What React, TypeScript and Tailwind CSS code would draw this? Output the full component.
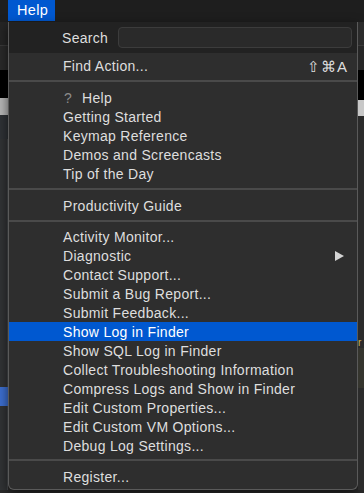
import React from 'react';

type Item = { label: string; icon?: boolean; submenu?: boolean; active?: boolean };

const group1: Item[] = [
  { label: 'Help', icon: true },
  { label: 'Getting Started' },
  { label: 'Keymap Reference' },
  { label: 'Demos and Screencasts' },
  { label: 'Tip of the Day' },
];

const group3: Item[] = [
  { label: 'Activity Monitor...' },
  { label: 'Diagnostic', submenu: true },
  { label: 'Contact Support...' },
  { label: 'Submit a Bug Report...' },
  { label: 'Submit Feedback...' },
  { label: 'Show Log in Finder', active: true },
  { label: 'Show SQL Log in Finder' },
  { label: 'Collect Troubleshooting Information' },
  { label: 'Compress Logs and Show in Finder' },
  { label: 'Edit Custom Properties...' },
  { label: 'Edit Custom VM Options...' },
  { label: 'Debug Log Settings...' },
];

function Row({ item }: { item: Item }) {
  return (
    <div
      className={
        'flex h-[19px] items-center pr-[13px] ' +
        (item.active ? 'bg-[#0058d0] text-white' : 'text-[#dedede]')
      }
    >
      {item.icon ? (
        <span className="flex items-center pl-[52px]">
          <span className="w-[14px] text-center text-[#8c8c8c]">?</span>
          <span className="ml-[7px]">{item.label}</span>
        </span>
      ) : (
        <span className="pl-[54px]">{item.label}</span>
      )}
      {item.submenu && (
        <svg className="ml-auto" width="9" height="10" viewBox="0 0 9 10">
          <path d="M0 0 L9 5 L0 10 Z" fill="#d4d4d4" />
        </svg>
      )}
    </div>
  );
}

function Separator({ top, bottom }: { top: string; bottom: string }) {
  return <div className={`h-[2px] bg-[#4a4a4a] ${top} ${bottom}`} />;
}

export default function App() {
  return (
    <div
      className="w-[364px] h-[493px] overflow-hidden bg-[#2b2b2b] text-[13px] leading-none"
      style={{ fontFamily: '"Liberation Sans", Arial, sans-serif' }}
    >
      {/* mac menu bar */}
      <div className="flex h-[22px] bg-[#1e1e1e] pl-[8px]">
        <div className="flex h-[21px] w-[47px] items-center bg-[#0058d0] pl-[9px] text-[14.5px] tracking-[0.3px] text-white">
          Help
        </div>
      </div>

      <div className="flex">
        {/* ide peeking out on the left */}
        <div className="flex w-[8px] flex-col">
          <div className="h-[23px] bg-[#252525]" />
          <div className="h-[25px] bg-[#2a2a2a] border-t border-[#3a3a3a]" />
          <div className="h-[28px] bg-black" />
          <div className="h-[17px] bg-[#b8b8b8]" />
          <div className="h-[24px] bg-[#2f3236]" />
          <div className="h-[248px] bg-[#313335] border-r border-[#45484b]" />
          <div className="h-[19px] bg-[#3d6fd0]" />
          <div className="flex-1 bg-[#313335] border-r border-[#45484b]" />
        </div>

        {/* the menu */}
        <div className="w-[350px] h-[468px] rounded-b-[6px] border border-t-0 border-[#5a5a5a] bg-[#2e2e2e] overflow-hidden shadow-[0_4px_12px_rgba(0,0,0,0.6)] text-[14px] tracking-[0.3px]">
          <div className="flex h-[31px] items-center bg-[#222222] pl-[53px] pr-[5px] text-[#dedede]">
            <span className="w-[56px]">Search</span>
            <div className="h-[21px] flex-1 rounded-[4px] border border-[#3c3c3c] bg-[#2a2a2a]" />
          </div>
          <div className="flex h-[26px] items-center justify-between pl-[54px] pr-[9px] text-[#dedede]">
            <span>Find Action...</span>
            <span className="text-[15px] tracking-[1px]">⇧⌘A</span>
          </div>
          <Separator top="mt-[1px]" bottom="mb-[6px]" />
          {group1.map((it) => (
            <Row key={it.label} item={it} />
          ))}
          <Separator top="mt-[5px]" bottom="mb-[6px]" />
          <Row item={{ label: 'Productivity Guide' }} />
          <Separator top="mt-[5px]" bottom="mb-[5px]" />
          {group3.map((it) => (
            <Row key={it.label} item={it} />
          ))}
          <Separator top="mt-[4px]" bottom="mb-[6px]" />
          <Row item={{ label: 'Register...' }} />
        </div>

        {/* ide peeking out on the right */}
        <div className="flex w-[6px] flex-col">
          <div className="h-[23px] bg-[#2b2b2b]" />
          <div className="h-[25px] bg-[#262626] border-t border-[#3a3a3a]" />
          <div className="h-[30px] bg-black" />
          <div className="h-[16px] bg-[#c8c8c8]" />
          <div className="h-[222px] bg-[#2b2b2b]" />
          <div className="h-[10px] bg-[#2b2b2b] text-[10px] text-[#c9b45a]">r</div>
          <div className="h-[40px] bg-[#35352e]" />
          <div className="flex-1 bg-[#2b2b2b]" />
        </div>
      </div>
    </div>
  );
}
